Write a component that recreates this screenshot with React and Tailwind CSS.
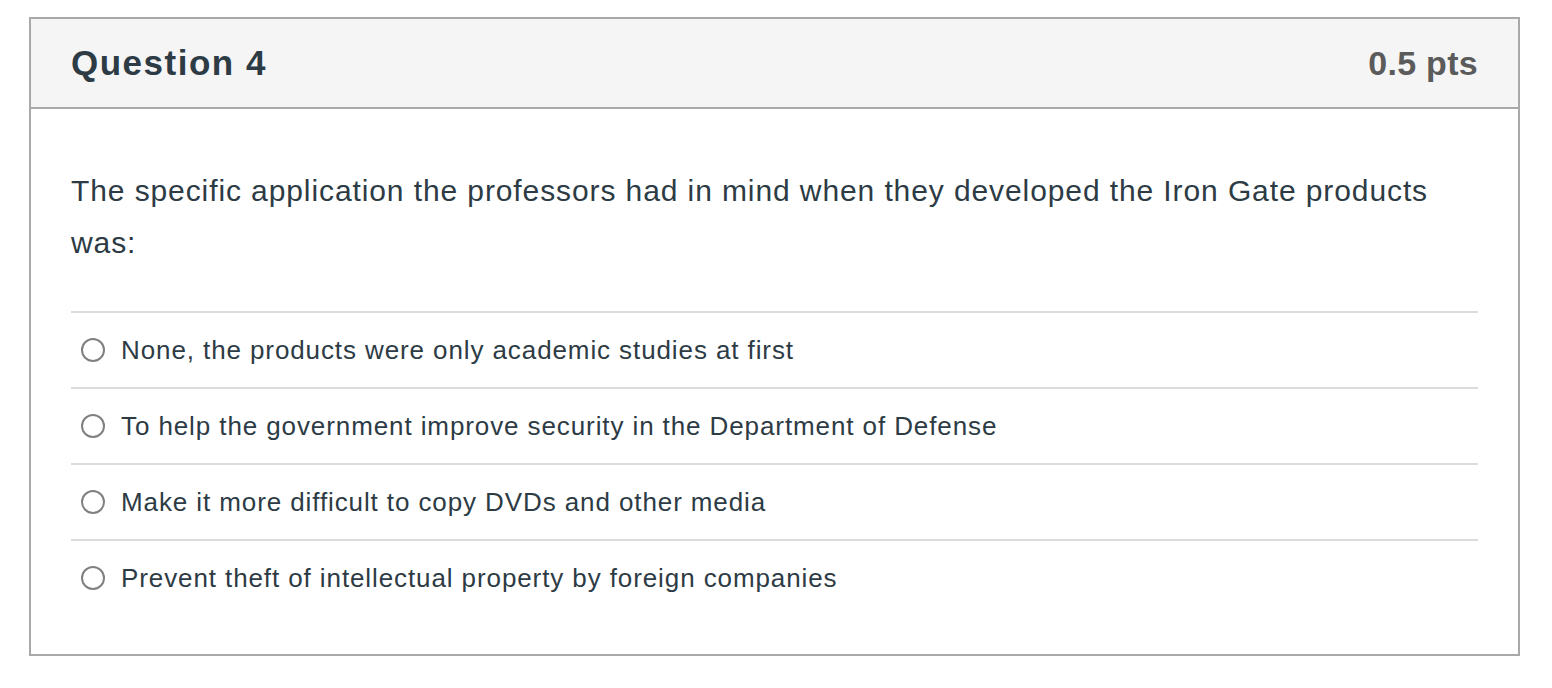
import React from 'react';

const answers = [
    'None, the products were only academic studies at first',
    'To help the government improve security in the Department of Defense',
    'Make it more difficult to copy DVDs and other media',
    'Prevent theft of intellectual property by foreign companies',
];

const Radio = () => (
    <span className="w-[24px] h-[24px] rounded-full border-2 border-[#808080] bg-white shrink-0" />
);

export default function App() {
    return (
        <div className="w-[1552px] h-[688px] bg-white pt-[17px] pl-[29px] font-['Liberation_Sans',Arial,sans-serif]">
            <div className="w-[1491px] h-[639px] border-2 border-[#a9a9a9] flex flex-col">
                {/* header */}
                <div className="h-[90px] bg-[#f5f5f5] border-b-2 border-[#a9a9a9] flex items-center justify-between pl-[40px] pr-[40px]">
                    <h2 className="text-[35px] font-bold tracking-[1.5px] text-[#2d3b45]">Question 4</h2>
                    <span className="text-[34px] font-bold tracking-[0.3px] text-[#5b5b5b]">0.5 pts</span>
                </div>

                {/* body */}
                <div className="px-[40px] pt-[56px]">
                    <p className="text-[30px] leading-[52px] tracking-[0.9px] text-[#2d3b45]">
                        The specific application the professors had in mind when they developed the Iron Gate products was:
                    </p>
                    <div className="mt-[42px]">
                        {answers.map((a) => (
                            <div key={a} className="h-[76px] border-t-2 border-[#dcdcdc] flex items-center gap-[16px] pl-[10px]">
                                <Radio />
                                <span className="text-[26px] tracking-[0.9px] text-[#2d3b45]">{a}</span>
                            </div>
                        ))}
                    </div>
                </div>
            </div>
        </div>
    );
}
